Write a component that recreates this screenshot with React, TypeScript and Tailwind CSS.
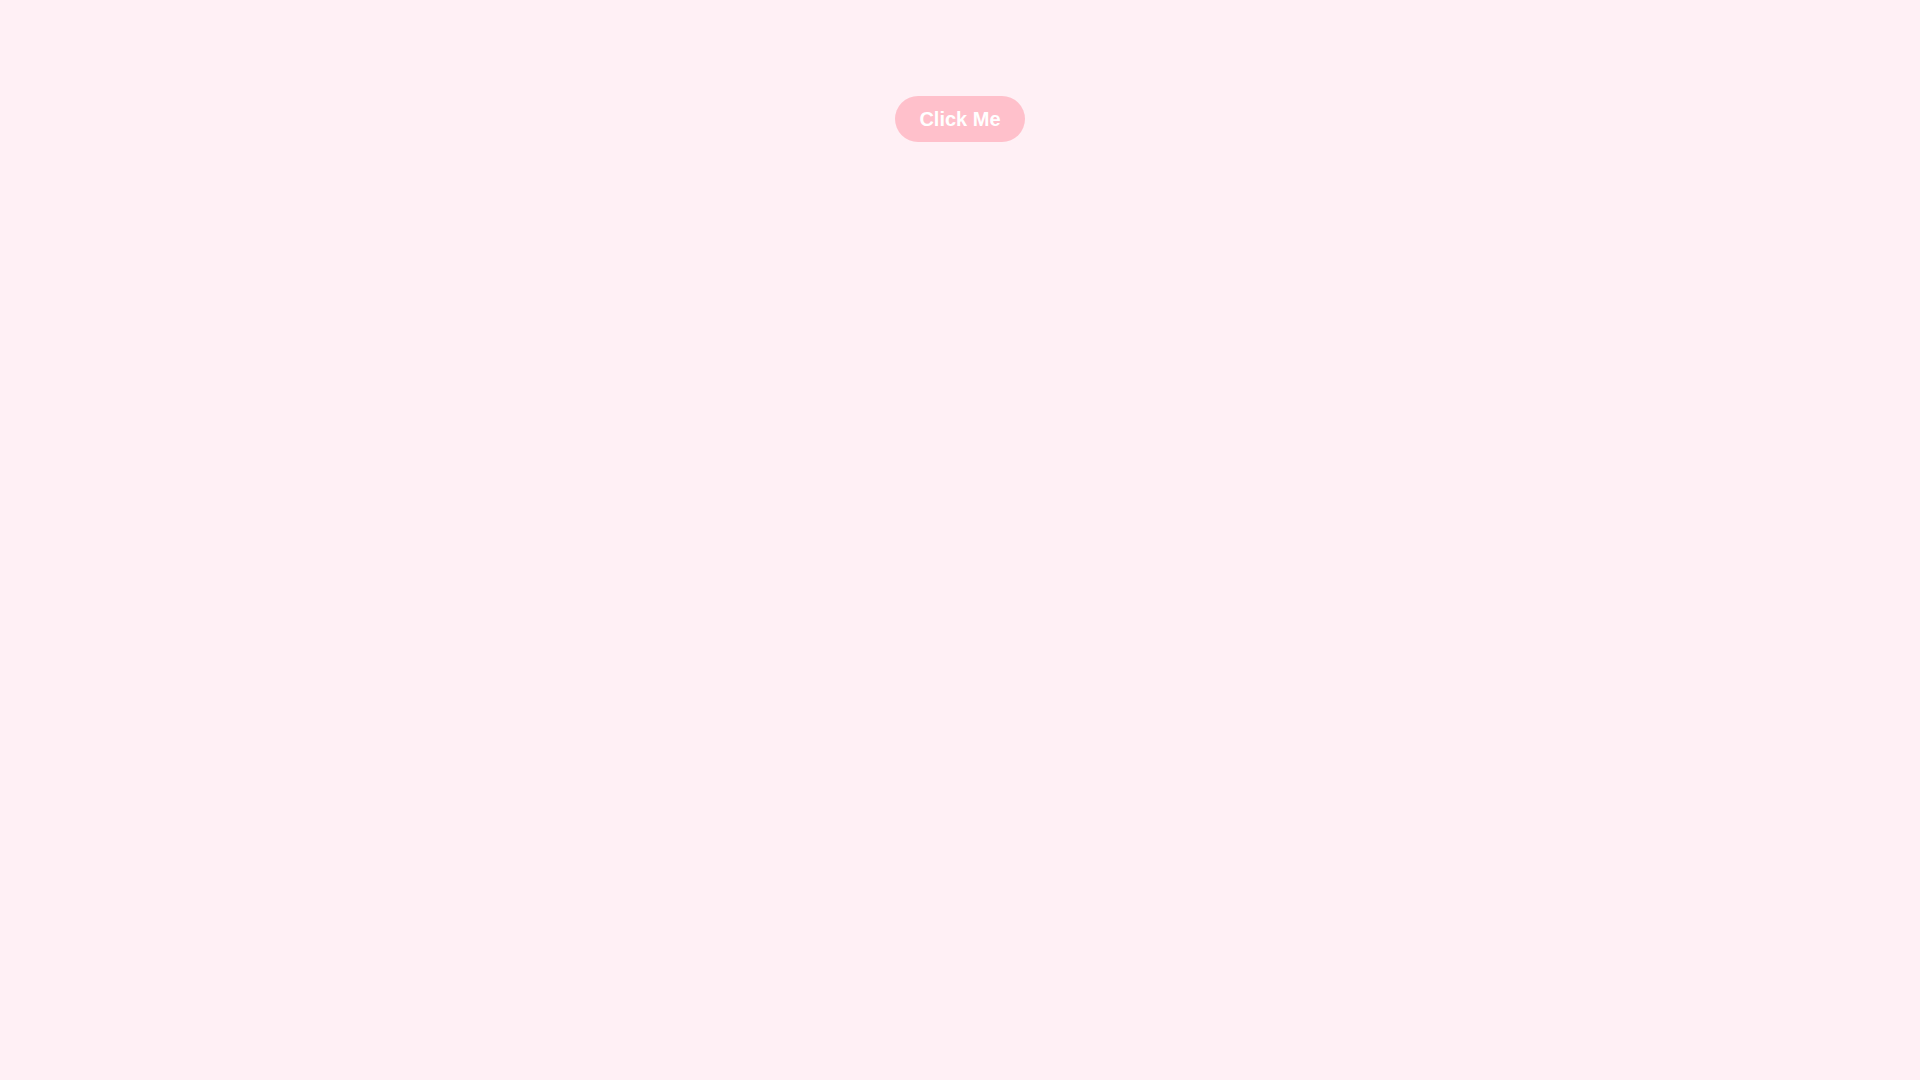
export default function App() {
  return (
    <div className="min-h-screen bg-[#fff0f5] flex flex-col items-center pt-[96px]" style={{ fontFamily: '"Liberation Sans", Arial, sans-serif' }}>
      <button className="h-[46px] px-6 rounded-full bg-[#ffc0cb] text-white text-[20px] font-bold leading-none">
        Click Me
      </button>
    </div>
  );
}
